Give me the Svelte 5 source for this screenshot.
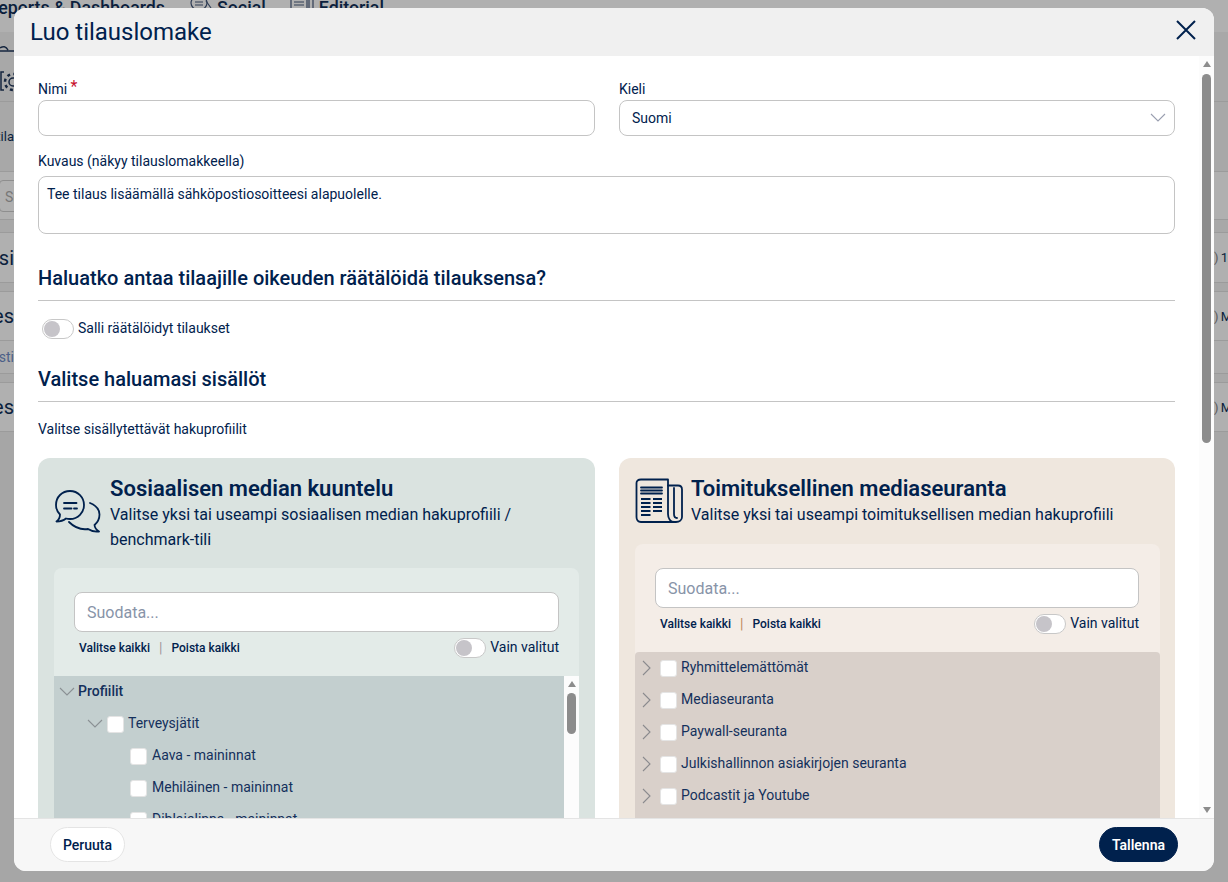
<script>
  const social = [
    { name: 'Profiilit', level: 0, open: true, check: false, bold: true },
    { name: 'Terveysjätit', level: 1, open: true, check: true },
    { name: 'Aava - maininnat', level: 2, check: true },
    { name: 'Mehiläinen - maininnat', level: 2, check: true },
    { name: 'Diblaialinna - maininnat', level: 2, check: true }
  ];
  const editorial = [
    'Ryhmittelemättömät',
    'Mediaseuranta',
    'Paywall-seuranta',
    'Julkishallinnon asiakirjojen seuranta',
    'Podcastit ja Youtube'
  ];
</script>

<div class="page">
  <div class="backdrop">
    <div class="nav">
      <span class="nav-item first">Reports &amp; Dashboards</span>
      <svg class="nav-icon" width="22" height="16" viewBox="0 0 22 16"><ellipse cx="9" cy="4" rx="8" ry="7" /><path d="M5 3h8M5 6h8M16 2l5 7" /></svg>
      <span class="nav-item">Social</span>
      <svg class="nav-icon ed" width="24" height="16" viewBox="0 0 24 16"><path d="M1 0v10M17 0v10M4 3h10M4 6h10M19 1v9M23 1v9" /></svg>
      <span class="nav-item">Editorial</span>
    </div>
    <div class="band b1">
      <svg class="gear" width="14" height="64" viewBox="0 0 14 64">
        <path d="M0 16c3-2 6-2 8 2M0 19h14" />
        <path d="M4 40H1v18h3" />
        <circle cx="13" cy="50" r="4" />
        <circle class="teeth" cx="13" cy="50" r="8" />
      </svg>
    </div>
    <div class="band b2"><span class="sliver small">tila</span></div>
    <div class="band b3"><div class="ghost-input">Suodata</div></div>
    <div class="band gap1"></div>
    <div class="band row r1"><span class="sliver big">si</span><span class="right">) <b>1</b></span></div>
    <div class="band gap2"></div>
    <div class="band row r2"><span class="sliver big">es</span><span class="right">) <b>M</b></span></div>
    <div class="band row r3"><span class="sliver link">sti</span></div>
    <div class="band gap2"></div>
    <div class="band row r2"><span class="sliver big">es</span><span class="right">) <b>M</b></span></div>
  </div>

  <div class="modal">
    <header class="modal-head">
      <h1>Luo tilauslomake</h1>
      <svg class="close" width="20" height="20" viewBox="0 0 20 20"><path d="M1 1l18 18M19 1L1 19" /></svg>
    </header>

    <div class="modal-body">
      <div class="content">
        <div class="two first-row">
          <div>
            <div class="label">Nimi <span class="req">*</span></div>
            <div class="input"></div>
          </div>
          <div>
            <div class="label">Kieli</div>
            <div class="input select">
              <span>Suomi</span>
              <svg width="16" height="10" viewBox="0 0 16 10"><path d="M1 1l7 7 7-7" /></svg>
            </div>
          </div>
        </div>
        <div class="label second">Kuvaus (näkyy tilauslomakkeella)</div>
        <div class="textarea">Tee tilaus lisäämällä sähköpostiosoitteesi alapuolelle.</div>

        <h2 class="h-a">Haluatko antaa tilaajille oikeuden räätälöidä tilauksensa?</h2>
        <div class="toggle-row">
          <span class="toggle"><i></i></span>
          <span class="up-1">Salli räätälöidyt tilaukset</span>
        </div>

        <h2 class="h-b">Valitse haluamasi sisällöt</h2>
        <p class="pick">Valitse sisällytettävät hakuprofiilit</p>

        <div class="two cards">
          <section class="card social">
            <div class="card-head">
              <div class="card-icon">
                <svg width="48" height="46" viewBox="0 0 48 46">
                  <path d="M16 1C8 1 2 7 2 15c0 4 1.500 7 4 9.500 0 3-1.500 5.500-3.500 7 3.500 0 7-1 9.500-3 1.500.4 2.800.5 4 .5 8 0 14-6.500 14-14S24 1 16 1Z" />
                  <path d="M10 13h12.500M10 18.500h7.500M20 18.500h3" />
                  <path d="M36 13c6 2.500 9.500 6.500 9.500 11.500 0 4.500-2 8-5 10.500.3 3 2 5 4.500 6.500-4 .5-8-.5-11-2.500-7 1-14-2-19-7" />
                </svg>
              </div>
              <div>
                <h3>Sosiaalisen median kuuntelu</h3>
                <p>Valitse yksi tai useampi sosiaalisen median hakuprofiili / benchmark-tili</p>
              </div>
            </div>
            <div class="panel">
              <div class="filter">
                <div class="search">Suodata...</div>
                <div class="filter-row">
                  <span class="lnk">Valitse kaikki</span><span class="sep">|</span><span class="lnk">Poista kaikki</span>
                  <span class="toggle only"><i></i></span>
                  <span class="only-label">Vain valitut</span>
                </div>
              </div>
              <div class="tree-wrap">
                <div class="tree">
                  {#each social as item}
                    <div class="node lv{item.level}">
                      {#if item.open}
                        <svg class="chev" width="16" height="10" viewBox="0 0 16 10"><path d="M1 1l7 7 7-7" /></svg>
                      {/if}
                      {#if item.check}<span class="box"></span>{/if}
                      <span class="txt" class:bold={item.bold}>{item.name}</span>
                    </div>
                  {/each}
                </div>
                <div class="mini-bar">
                  <span class="arrow up"></span>
                  <span class="mini-thumb"></span>
                </div>
              </div>
            </div>
          </section>

          <section class="card editorial">
            <div class="card-head ed-head">
              <div class="card-icon">
                <svg width="48" height="46" viewBox="0 0 48 46">
                  <path d="M6 1.500H33V36c0 4.500 2.500 8 6 8H6c-3 0-4.500-2-4.500-5V5C1.500 3 3 1.500 6 1.500Z" />
                  <path d="M33 7.500h10c2.500 0 4 1.500 4 4V39c0 3-2.500 5-6 5h-2" />
                  <path d="M39 10v26c0 2.500 1.500 4 3 4" />
                  <path d="M6 9.500h21M6 12.500h21M6 15.500h21" />
                  <path class="thick" d="M6 21h9.500M18 21h9M6 25h9.500M18 25h9M6 29h9.500M18 29h9M6 33h9.500M18 33h9M6 37h9.500" />
                </svg>
              </div>
              <div>
                <h3>Toimituksellinen mediaseuranta</h3>
                <p>Valitse yksi tai useampi toimituksellisen median hakuprofiili</p>
              </div>
            </div>
            <div class="panel">
              <div class="filter">
                <div class="search">Suodata...</div>
                <div class="filter-row">
                  <span class="lnk">Valitse kaikki</span><span class="sep">|</span><span class="lnk">Poista kaikki</span>
                  <span class="toggle only"><i></i></span>
                  <span class="only-label">Vain valitut</span>
                </div>
              </div>
              <div class="tree-wrap">
                <div class="tree">
                  {#each editorial as name}
                    <div class="node closed">
                      <svg class="chev-r" width="10" height="16" viewBox="0 0 10 16"><path d="M1 1l7 7-7 7" /></svg>
                      <span class="box"></span>
                      <span class="txt">{name}</span>
                    </div>
                  {/each}
                </div>
              </div>
            </div>
          </section>
        </div>
      </div>

      <div class="bar">
        <span class="arrow up"></span>
        <span class="thumb"></span>
        <span class="arrow down"></span>
      </div>
    </div>

    <footer class="modal-foot">
      <button class="btn ghost">Peruuta</button>
      <button class="btn solid">Tallenna</button>
    </footer>
  </div>
</div>

<style>
  :global(body) {
    margin: 0;
    font-family: Roboto, "Liberation Sans", sans-serif;
    color: #00214d;
  }
  * { box-sizing: border-box; }
  h1, h2, h3, p { margin: 0; }

  .page {
    position: relative;
    width: 1228px;
    height: 882px;
    overflow: hidden;
    background: #a6a6a6;
  }

  /* dimmed page behind the dialog */
  .backdrop { color: #0b1f3d; }
  .nav {
    height: 32px;
    display: flex;
    align-items: flex-start;
    background: #b0b0b0;
    overflow: hidden;
  }
  .nav-item {
    font-size: 17.800px;
    font-weight: 500;
    line-height: 20px;
    margin-top: -2px;
    white-space: nowrap;
  }
  .first { margin-left: -13px; margin-right: 25px; }
  .nav-icon { margin: -1px 5px 0 0; fill: none; stroke: #2f3d55; stroke-width: 1.200; }
  .nav-icon.ed { margin-left: 24px; }
  .band { display: flex; align-items: center; justify-content: space-between; border-bottom: 1px solid #9b9b9b; background: #a8a8a8; }
  .b1 { height: 70px; align-items: flex-start; }
  .gear { fill: none; stroke: #16263f; stroke-width: 1.500; }
  .gear .teeth { stroke-width: 2.500; stroke-dasharray: 3 3.300; }
  .b2 { height: 70px; }
  .b3 { height: 48px; background: #b0b0b0; align-items: flex-start; padding-top: 8px; }
  .gap1 { height: 13px; }
  .gap2 { height: 9px; }
  .r1 { height: 50px; background: #b0b0b0; }
  .r2 { height: 49px; background: #b0b0b0; }
  .r3 { height: 33px; background: #adadad; }
  .sliver { width: 14px; display: flex; justify-content: flex-end; white-space: nowrap; overflow: hidden; }
  .small { font-size: 13px; }
  .big { font-size: 20px; }
  .link { font-size: 14px; color: #4b5f88; }
  .ghost-input {
    width: 40px;
    height: 32px;
    margin-left: -1px;
    padding: 8px 0 0 5px;
    border: 1px solid #8e8e8e;
    border-radius: 4px;
    font-size: 14px;
    color: #777;
    overflow: hidden;
  }
  .right { width: 14px; white-space: nowrap; font-size: 13px; color: #5a5a5a; }
  .right b { font-weight: 400; color: #0b1f3d; margin-left: -1px; }

  /* dialog */
  .modal {
    position: absolute;
    left: 14px;
    top: 8px;
    width: 1200px;
    height: 863px;
    display: flex;
    flex-direction: column;
    background: #fff;
    border-radius: 12px;
    overflow: hidden;
  }
  .modal-head {
    height: 48px;
    flex: none;
    display: flex;
    align-items: center;
    justify-content: space-between;
    padding: 0 18px 0 16px;
    background: #f0f0f0;
  }
  h1 { font-size: 24px; font-weight: 400; line-height: 48px; }
  .close { fill: none; stroke: #00214d; stroke-width: 2; margin-top: -4px; }

  .modal-body { position: relative; flex: 1; min-height: 0; overflow: hidden; }
  .content { padding: 23px 39px 0 24px; }
  .two { display: grid; grid-template-columns: 557px 556px; column-gap: 24px; }
  .first-row { margin-bottom: 15px; }
  .label { font-size: 14px; line-height: 20px; margin-bottom: 1px; }
  .label.second { margin-bottom: 5px; }
  .req { color: #c8102e; font-size: 16px; line-height: 1; vertical-align: 2px; }
  .input {
    height: 36px;
    border: 1px solid #c4c4c4;
    border-radius: 8px;
    background: #fff;
  }
  .select {
    display: flex;
    align-items: center;
    justify-content: space-between;
    padding: 0 8px 0 12px;
    font-size: 14px;
  }
  .select svg { fill: none; stroke: #9a9fb0; stroke-width: 1.100; }
  .textarea {
    height: 58px;
    padding: 8px 8px;
    border: 1px solid #c4c4c4;
    border-radius: 8px;
    font-size: 14px;
    line-height: 18px;
  }
  h2 {
    font-size: 20px;
    font-weight: 500;
    line-height: 24px;
    padding-bottom: 10px;
    border-bottom: 1px solid #c4c4c4;
  }
  .h-a { margin-top: 32px; }
  .h-b { margin-top: 28px; }
  .toggle-row {
    display: flex;
    align-items: center;
    gap: 4px;
    margin: 18px 0 0 4px;
    height: 20px;
    font-size: 14px;
  }
  .up-1 { margin-bottom: 2px; }
  .toggle {
    flex: none;
    display: flex;
    align-items: center;
    width: 32px;
    height: 20px;
    padding-left: 1px;
    background: #fff;
    border: 1px solid #c8c8c8;
    border-radius: 10px;
  }
  .toggle i { width: 16px; height: 16px; border-radius: 50%; background: #c6c4c9; }
  .pick { margin-top: 17px; font-size: 14px; line-height: 20px; }

  .cards { margin-top: 19px; }
  .card { border-radius: 12px 12px 0 0; padding: 16px 16px 0; height: 500px; }
  .social { background: #dae3e0; }
  .editorial { background: #efe7de; padding-right: 15px; }
  .card-head { display: flex; align-items: center; margin-bottom: 16px; }
  .ed-head { margin-bottom: 17px; }
  .card-icon { flex: none; width: 56px; display: flex; }
  .card-icon svg { fill: none; stroke: #00214d; stroke-width: 1.800; stroke-linecap: round; stroke-linejoin: round; }
  .card-icon .thick { stroke-width: 2.200; stroke-linecap: butt; }
  h3 { font-size: 22px; font-weight: 600; line-height: 30px; margin-bottom: -2px; }
  .card-head p { font-size: 16px; line-height: 25px; }
  .panel { border-radius: 8px 8px 0 0; }
  .social .panel { background: #e3ebe8; }
  .editorial .panel { background: #f4ede7; }
  .filter { padding: 24px 20px 14px; }
  .editorial .filter { padding-right: 21px; }
  .search {
    height: 40px;
    padding-left: 12px;
    background: #fff;
    border: 1px solid #c4c4c4;
    border-radius: 8px;
    font-size: 16px;
    line-height: 39px;
    color: #8894a8;
  }
  .filter-row { height: 30px; display: flex; align-items: center; padding: 2px 0 0 5px; font-size: 14px; }
  .only-label { margin-bottom: 2px; }
  .lnk { font-size: 12px; font-weight: 500; }
  .sep { margin: 0 9px; font-size: 14px; line-height: 14px; color: #a3979a; }
  .editorial .sep { color: #c08a5c; }
  .only { margin-left: auto; margin-right: 4px; }
  .tree-wrap { display: flex; height: 240px; }
  .tree { flex: 1; border-radius: 4px 4px 0 0; font-size: 14px; color: #14305c; }
  .social .tree { background: #c3cfcf; border-radius: 0; }
  .editorial .tree { background: #d9d0ca; }
  .node { height: 32px; display: flex; align-items: center; }
  .txt { margin-bottom: 2px; }
  .lv0 { padding-left: 5px; }
  .lv1 { padding-left: 33px; }
  .lv2 { padding-left: 76px; }
  .closed { padding-left: 7px; }
  .bold { font-weight: 500; }
  .chev { flex: none; margin-right: 3px; fill: none; stroke: #8a9094; stroke-width: 1.100; }
  .lv1 .chev { margin-right: 4px; }
  .chev-r { flex: none; margin-right: 8px; fill: none; stroke: #8a8a8e; stroke-width: 1.100; }
  .box {
    flex: none;
    width: 17px;
    height: 17px;
    margin-right: 4px;
    background: #fff;
    border: 1px solid #e4e4e4;
    border-radius: 3px;
  }
  .lv2 .box { margin-right: 5px; }
  .mini-bar {
    flex: none;
    width: 15px;
    display: flex;
    flex-direction: column;
    align-items: center;
    padding-top: 5px;
    background: #fcfcfc;
  }
  .mini-thumb { width: 9px; height: 41px; margin-top: 6px; border-radius: 5px; background: #8c8c8c; }
  .arrow { width: 0; height: 0; border-left: 4.500px solid transparent; border-right: 4.500px solid transparent; }
  .up { border-bottom: 6px solid #8c8c8c; }
  .down { border-top: 6px solid #8c8c8c; margin-top: auto; }

  /* page scrollbar, drawn over the dialog body */
  .bar {
    position: absolute;
    top: 0;
    right: 0;
    bottom: 0;
    width: 15px;
    display: flex;
    flex-direction: column;
    align-items: center;
    padding: 5px 0 5px;
    background: #fcfcfc;
  }
  .thumb { width: 9px; height: 369px; margin-top: 7px; border-radius: 5px; background: #8c8c8c; }

  .modal-foot {
    height: 53px;
    flex: none;
    display: flex;
    align-items: center;
    justify-content: space-between;
    padding: 0 36px 1px;
    background: #f7f7f7;
    border-top: 1px solid #e4e4e4;
  }
  .btn {
    height: 35px;
    padding: 0 12px;
    border-radius: 18px;
    font-family: inherit;
    font-size: 14px;
    font-weight: 500;
  }
  .ghost { background: #fff; color: #00214d; border: 1px solid #e4e4e4; }
  .solid { background: #00214d; color: #fff; border: 1px solid #00214d; font-weight: 600; }
</style>
